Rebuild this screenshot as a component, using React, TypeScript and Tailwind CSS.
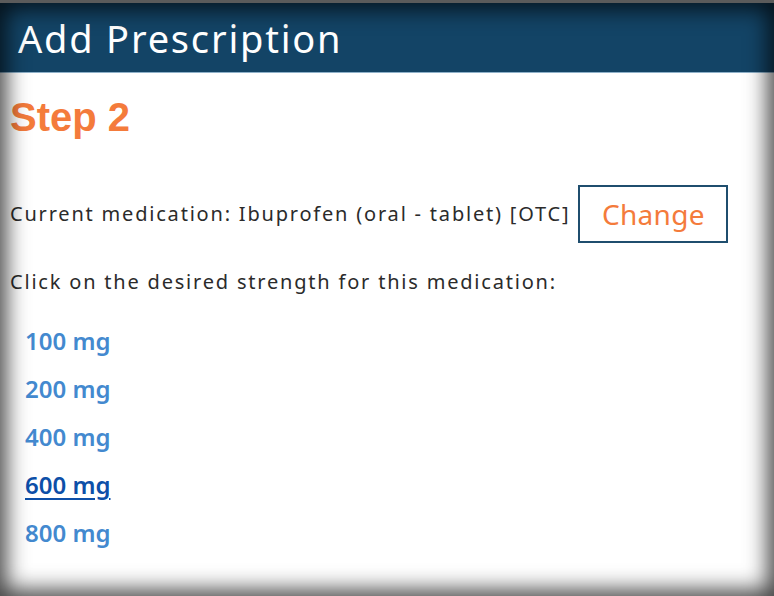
const strengths = ['100 mg', '200 mg', '400 mg', '600 mg', '800 mg']

export default function App() {
  return (
    <div className="relative w-[774px] h-[596px] overflow-hidden bg-white border-t-[3px] border-[#5b5b5b]" style={{ fontFamily: '"Noto Sans", sans-serif' }}>
      {/* Header */}
      <div className="h-[70px] bg-[#134466] border-b border-[#8fb1c9] flex items-center px-[18px]">
        <h1 className="text-[38px] text-white leading-none tracking-[1.8px]">Add Prescription</h1>
      </div>

      <div className="px-[10px]">
        <div className="pt-[20px] text-[40px] font-bold text-[#f47b3b] leading-[48px]" style={{ fontFamily: '"Liberation Sans", sans-serif' }}>
          Step 2
        </div>

        <div className="mt-[44px] flex items-center gap-[8px]">
          <span className="text-[20px] text-[#2b2b2b] tracking-[1.8px]">Current medication: Ibuprofen (oral - tablet) [OTC]</span>
          <button className="w-[150px] h-[58px] border-2 border-[#1f4e6e] text-[28px] text-[#f47b3b] tracking-[0.3px]">Change</button>
        </div>

        <div className="mt-[24px] text-[20px] text-[#2b2b2b] tracking-[1.8px]">Click on the desired strength for this medication:</div>

        <div className="mt-[29px] pl-[15px] flex flex-col gap-[18px]">
          {strengths.map((s) => (
            <a
              key={s}
              className={
                s === '600 mg'
                  ? 'text-[24px] font-semibold leading-[30px] text-[#0d4fa8] underline underline-offset-4'
                  : 'text-[24px] font-semibold leading-[30px] text-[#4389cf]'
              }
            >
              {s}
            </a>
          ))}
        </div>
      </div>

      {/* vignette frame */}
      <div className="pointer-events-none absolute inset-0 shadow-[inset_0_0_22px_6px_rgba(0,0,0,0.75)]" />
    </div>
  )
}
